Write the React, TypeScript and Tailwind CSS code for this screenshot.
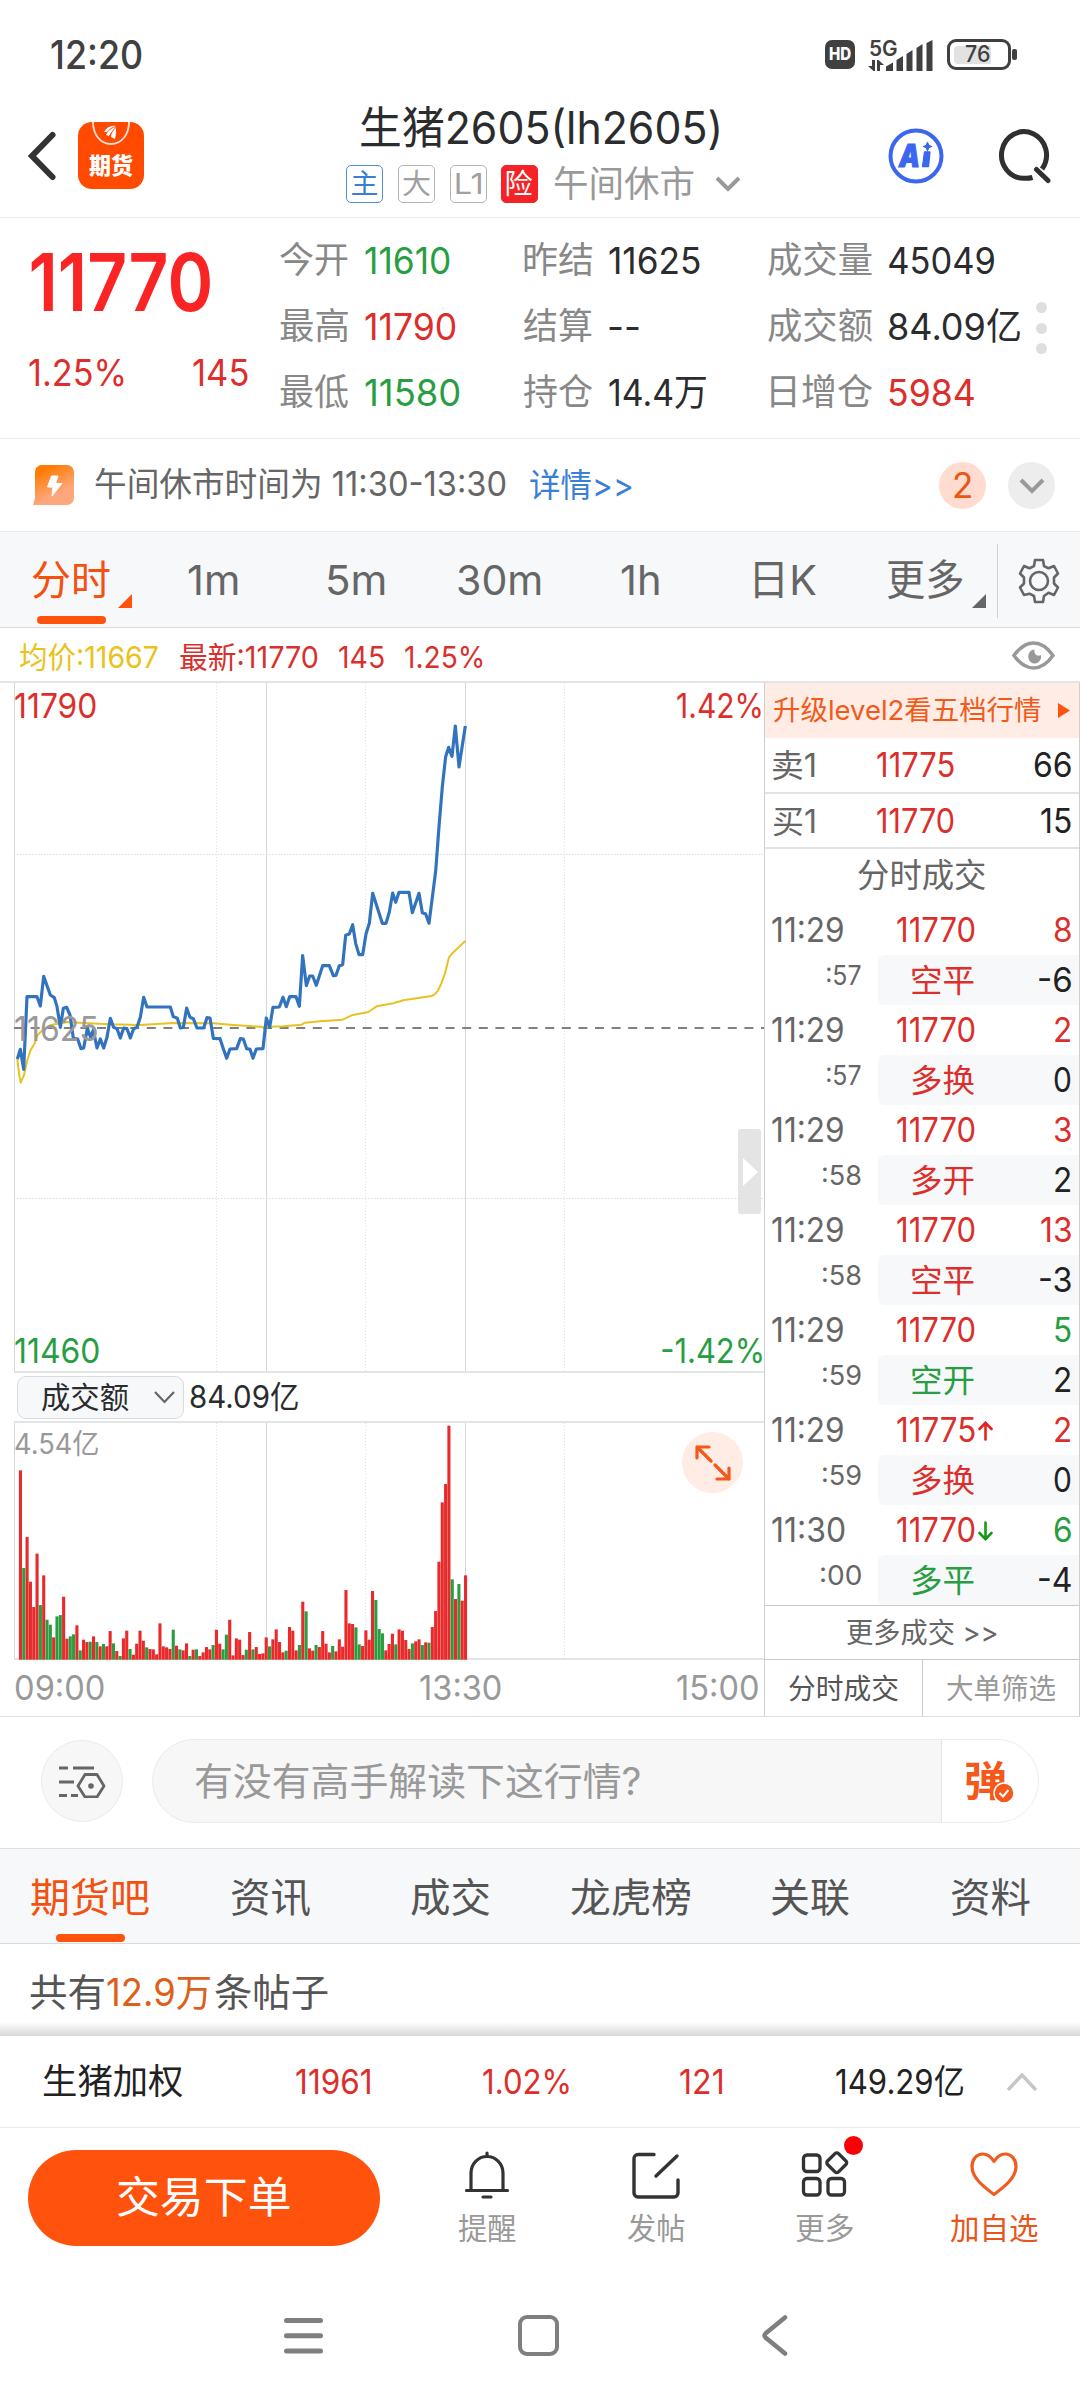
import { useLayoutEffect, useRef, useState } from "react";
import type { ReactNode } from "react";

let measureCtx: CanvasRenderingContext2D | null = null;

/** One line of text whose glyphs span exactly `w` pixels. */
function T({ w, className = "", children }: { w: number; className?: string; children: string }) {
  const ref = useRef<HTMLSpanElement>(null);
  const [fit, setFit] = useState({ scale: 1, shift: 0 });
  useLayoutEffect(() => {
    if (!ref.current) return;
    measureCtx = measureCtx ?? document.createElement("canvas").getContext("2d");
    if (!measureCtx) return;
    const cs = getComputedStyle(ref.current);
    measureCtx.font = `${cs.fontWeight} ${cs.fontSize} ${cs.fontFamily}`;
    const m = measureCtx.measureText(children);
    const ink = m.actualBoundingBoxLeft + m.actualBoundingBoxRight;
    if (ink > 0) {
      const scale = w / ink;
      setFit({ scale, shift: m.actualBoundingBoxLeft * scale });
    }
  }, [w, children]);
  return (
    <span className={`block flex-none leading-none ${className}`} style={{ width: w }}>
      <span
        ref={ref}
        className="block w-max origin-left whitespace-pre leading-none"
        style={{ transform: `translateX(${fit.shift}px) scaleX(${fit.scale})` }}
      >
        {children}
      </span>
    </span>
  );
}

const RED = "text-[#dc2f2c]";
const GREEN = "text-[#279e42]";
const DARK = "text-[#2b2c2e]";

function Chevron({ className, d = "M2 2 L13 13 L24 2", box = "0 0 26 16", sw = 4 }: { className: string; d?: string; box?: string; sw?: number }) {
  return (
    <svg className={className} viewBox={box} fill="none" stroke="currentColor" strokeWidth={sw}>
      <path d={d} />
    </svg>
  );
}

function StatusBar() {
  return (
    <div className="flex h-[109px] items-center pl-[51px] text-[#404040]">
      <T w={91} className="text-[39px] font-medium">12:20</T>
      <div className="ml-[683px] flex h-[29px] w-[30px] items-center justify-center rounded-[7px] bg-[#404040] text-white">
        <T w={22} className="text-[17px] font-extrabold">HD</T>
      </div>
      <div className="ml-[13px] flex h-[34px] w-[65px] items-end">
        <div className="flex w-[18px] flex-none flex-col self-stretch">
          <T w={27} className="ml-[2px] text-[21px] font-semibold">5G</T>
          <svg className="mt-[1px] h-[11px] w-[16px] flex-none" viewBox="0 0 16 11" fill="#404040">
            <path d="M4 0h3v11H5.500L0 6h4z M9 0h1.500L16 5h-4v6H9z" />
          </svg>
        </div>
        <svg className="mb-[1px] h-[31px] w-[47px] flex-none" viewBox="0 0 47 31" fill="#404040">
          <path d="M0 31v-4.5l7-4V31z M10.5 31V20l6.5-4v15z M20.5 31V14l6-4v21z M30.5 31V8l6-4v27z M40.5 31V3l6-3v31z" />
        </svg>
      </div>
      <div className="ml-[14px] flex h-[31px] w-[64px] items-center rounded-[9px] border-[3px] border-[#404040] pl-[4px]">
        <div className="flex h-[18px] w-[37px] items-center rounded-l-[4px] bg-[#e2e2e2] pl-[12px]">
          <T w={24} className="text-[23px] font-medium">76</T>
        </div>
      </div>
      <div className="ml-[1px] h-[11px] w-[5px] rounded-[2px] bg-[#404040]" />
    </div>
  );
}

function Badge({ children, className, w }: { children: string; className: string; w: number }) {
  return (
    <div className={`flex h-[38px] w-[37px] flex-none items-center justify-center rounded-[5px] border-[1.5px] ${className}`}>
      <T w={w} className="text-[28px]">{children}</T>
    </div>
  );
}

function Header() {
  return (
    <div className="border-b border-[#ebebeb] pb-[15px]">
      <div className="flex h-[93px] items-center pl-[28px]">
        <svg className="h-[50px] w-[29px]" viewBox="0 0 29 50" fill="none" stroke="#323334" strokeWidth="6" strokeLinecap="round">
          <path d="M24.5 4 L4 25 L24.5 46" strokeLinejoin="miter" />
        </svg>
        <div className="relative ml-[21px] flex h-[67px] w-[66px] items-end justify-center overflow-hidden rounded-[14px] bg-[#ff4a00] pb-[11px] text-white">
          <svg className="absolute left-[13px] top-0 h-[26px] w-[40px]" viewBox="0 0 40 26">
            <path d="M2 0C2 12 9 22 20 22S38 12 38 0" fill="none" stroke="#ffe3d5" strokeWidth="1.8" />
            <path d="M13 10c3-5 7-7 12-6-4 1-7 3-9 6zM15 13c2-4 5-7 10-8-3 3-5 5-7 9zM20 15c0-4 2-6 5-9 0 4 0 7-1 11z" fill="#fff" />
          </svg>
          <T w={44} className="text-[23px] font-black">期货</T>
        </div>
        <div className="ml-[202px] flex h-[111px] w-[396px] flex-none flex-col">
          <div className="flex h-[57px] items-center pl-[15px]">
            <T w={358} className={`text-[44.5px] ${DARK}`}>生猪2605(lh2605)</T>
          </div>
          <div className="flex h-[54px] items-center">
            <Badge w={26} className="border-[#4c8fdc] text-[#3a7fd5]">主</Badge>
            <Badge w={27} className="ml-[15px] border-[#b4b4b4] text-[#a0a0a0]">大</Badge>
            <Badge w={25} className="ml-[15px] border-[#b4b4b4] text-[#a0a0a0]">L1</Badge>
            <Badge w={26} className="ml-[14px] border-[#f52227] bg-[#f52227] text-white">险</Badge>
            <T w={140} className="ml-[16px] text-[36px] text-[#999]">午间休市</T>
            <Chevron className="ml-[20px] h-[16px] w-[28px] text-[#999]" />
          </div>
        </div>
        <svg className="ml-[146px] h-[56px] w-[56px]" viewBox="0 0 56 56">
          <circle cx="28" cy="28" r="25.5" fill="none" stroke="#3a66f0" strokeWidth="4" />
          <text x="11" y="38.500" fontSize="31" fontWeight="900" fontStyle="italic" fill="#3a66f0" stroke="#3a66f0" strokeWidth="1" textLength="21" lengthAdjust="spacingAndGlyphs">A</text>
          <path d="M36.500 24h5.500l-1.500 14.500h-6z M39.500 14.500l1.200 2.800 2.800 1.200-2.800 1.200-1.200 2.800-1.200-2.800-2.800-1.200 2.800-1.200z" fill="#3a66f0" stroke="#3a66f0" strokeWidth="1.300" strokeLinejoin="round" />
        </svg>
        <svg className="ml-[54px] h-[56px] w-[56px]" viewBox="0 0 56 56" fill="none" stroke="#2f3031" strokeWidth="5" strokeLinecap="round">
          <path d="M34.5 49.500C31.500 50.300 29 50.500 26.500 50.300A22.500 23.300 0 1 1 44 41" strokeLinecap="butt" />
          <path d="M38.500 41.500 L50 52.500" />
        </svg>
      </div>
    </div>
  );
}

const quoteRows: { label: string; lw: number; value: string; vw: number; tone: string }[][] = [
  [
    { label: "今开", lw: 68, value: "11610", vw: 85, tone: GREEN },
    { label: "昨结", lw: 68, value: "11625", vw: 91, tone: DARK },
    { label: "成交量", lw: 104, value: "45049", vw: 105, tone: DARK },
  ],
  [
    { label: "最高", lw: 68, value: "11790", vw: 91, tone: RED },
    { label: "结算", lw: 68, value: "--", vw: 30, tone: DARK },
    { label: "成交额", lw: 104, value: "84.09亿", vw: 131, tone: DARK },
  ],
  [
    { label: "最低", lw: 68, value: "11580", vw: 95, tone: GREEN },
    { label: "持仓", lw: 68, value: "14.4万", vw: 97, tone: DARK },
    { label: "日增仓", lw: 101, value: "5984", vw: 85, tone: RED },
  ],
];

function Quote() {
  return (
    <div className="flex h-[221px] border-b border-[#ebebeb]">
      <div className="flex w-[280px] flex-none flex-col pt-[24px]">
        <T w={179} className="ml-[31px] text-[80px] font-semibold text-[#f92423]">11770</T>
        <div className={`mt-[32px] flex pl-[29px] text-[37px] ${RED}`}>
          <T w={95}>1.25%</T>
          <T w={55} className="ml-[69px]">145</T>
        </div>
      </div>
      <div className="flex w-[756px] flex-none flex-col pt-[9px]">
        {quoteRows.map((row) => (
          <div key={row[0].label} className="grid h-[66px] grid-cols-[244px_244px_268px] items-center">
            {row.map((c) => (
              <div key={c.label} className="flex items-center">
                <T w={c.lw} className={`text-[36px] text-[#888] ${c.lw === 101 ? "ml-[3px]" : ""}`}>{c.label}</T>
                <T w={c.vw} className={`ml-[17px] text-[37px] ${c.tone}`}>{c.value}</T>
              </div>
            ))}
          </div>
        ))}
      </div>
      <div className="flex flex-col gap-[9.500px] pt-[84px]">
        <i className="size-[11px] rounded-full bg-[#dedede]" />
        <i className="size-[11px] rounded-full bg-[#dedede]" />
        <i className="size-[11px] rounded-full bg-[#dedede]" />
      </div>
    </div>
  );
}

function Notice() {
  return (
    <div className="flex h-[93px] items-center border-b border-[#e8e9ea] pl-[33px]">
      <svg className="h-[40px] w-[41px]" viewBox="0 0 41 40">
        <defs>
          <linearGradient id="bolt" x1="0.2" y1="0" x2="0.7" y2="1">
            <stop offset="0.1" stopColor="#ff7a00" />
            <stop offset="0.75" stopColor="#ffa77c" />
          </linearGradient>
        </defs>
        <path d="M8 0H34a7 7 0 0 1 7 7V33a7 7 0 0 1-7 7H0L2 33V7a7 7 0 0 1 6-7z" fill="url(#bolt)" />
        <path d="M18.500 11h6.500l-2.500 7.500h6.500L19 31l1-9h-5.500z" fill="#fff" stroke="#fff" strokeWidth="1" strokeLinejoin="round" />
      </svg>
      <T w={411} className="ml-[21px] text-[33.500px] text-[#666]">午间休市时间为 11:30-13:30</T>
      <T w={102} className="ml-[24px] text-[33px] text-[#3a7fd5]">详情&gt;&gt;</T>
      <div className="ml-[307px] flex h-[47px] w-[47px] items-center justify-center rounded-full bg-[#ffdccf]">
        <T w={17} className="text-[35px] text-[#ea5514]">2</T>
      </div>
      <div className="ml-[22px] flex h-[47px] w-[47px] items-center justify-center rounded-full bg-[#ededed] pt-[2px] text-[#999]">
        <Chevron className="h-[16px] w-[26px]" />
      </div>
    </div>
  );
}

function Corner({ className }: { className: string }) {
  return (
    <svg className={`h-[14px] w-[14px] ${className}`} viewBox="0 0 14 14" fill="currentColor">
      <path d="M14 0V14H0z" />
    </svg>
  );
}

function PeriodTabs() {
  return (
    <div className="flex h-[96px] items-center border-b border-[#d8dadb] bg-[#f7f8fa] pl-[32px] pt-[2px] text-[41.500px] text-[#666]">
      <div className="relative flex w-[100px] flex-none items-center text-[#f4500f]">
        <T w={78} className="text-[41px]">分时</T>
        <Corner className="ml-[8px] mt-[40px] text-[#ff520d]" />
        <div className="absolute left-[5px] top-[62px] h-[8px] w-[69px] rounded-full bg-[#ff520d]" />
      </div>
      <T w={50} className="ml-[56px]">1m</T>
      <T w={57} className="ml-[90px]">5m</T>
      <T w={83} className="ml-[73px]">30m</T>
      <T w={38} className="ml-[80px]">1h</T>
      <T w={61} className="ml-[96px]">日K</T>
      <T w={76} className="ml-[71px]">更多</T>
      <Corner className="ml-[9px] mt-[40px]" />
      <div className="ml-[10.500px] h-[74px] w-px bg-[#d0d1d3]" />
      <svg className="ml-[20px] h-[46px] w-[42px]" viewBox="0 0 42 46" fill="none" stroke="#666" strokeWidth="2.600" strokeLinejoin="round">
        <path d="M17 2h8l1 6 4.500 2.300 5.500-2.300 4 7.500-4 4v6l4 4-4 7.500-5.500-2.300L26 38l-1 6h-8l-1-6-4.500-2.300L6 37l-4-7.500 4-4v-6l-4-4L6 8l5.500 2.300L16 8z" />
        <circle cx="21" cy="23" r="9" />
      </svg>
    </div>
  );
}

function Legend() {
  return (
    <div className="flex h-[53px] items-center pl-[20px] pt-[5px] text-[30px] text-[#d8302d]">
      <T w={138} className="text-[#e9c21c]">均价:11667</T>
      <T w={138} className="ml-[22px]">最新:11770</T>
      <T w={45} className="ml-[21px]">145</T>
      <T w={78} className="ml-[21px]">1.25%</T>
      <svg className="mb-[4px] ml-[529px] h-[29px] w-[43px]" viewBox="0 0 43 29">
        <path d="M2 14.500C8 6 14 2 21.500 2S35 6 41 14.500C35 23 29 27 21.500 27S8 23 2 14.500z" fill="none" stroke="#999" strokeWidth="3.500" />
        <path d="M22.500 8.500a6.500 7 0 1 0 6.500 5.500c-3 2-7.500-.5-6.500-5.500z" fill="#999" />
      </svg>
    </div>
  );
}

const priceLine =
  "52,1137 61,1108 71,1168 81,950 111,950 121,978 131,889 151,945 163,953 171,980 181,1042 190,985 200,982 210,1005 220,1075 233,1077 243,1106 251,1104 262,1046 272,1072 280,1050 291,1104 301,1077 311,1104 321,1072 331,1015 341,1042 351,1046 361,1074 371,1044 381,1046 391,1074 401,1046 411,1042 421,1012 431,952 441,981 511,981 520,1010 532,1015 541,1044 550,1042 560,984 570,1012 580,1016 591,1044 611,1044 621,1013 630,1014 640,1075 660,1076 670,1106 680,1135 690,1107 710,1106 721,1076 730,1077 740,1106 750,1108 759,1135 769,1107 789,1106 799,1014 809,1042 819,982 838,981 849,952 859,980 869,950 888,950 898,979 908,827 919,917 929,888 938,888 949,916 968,857 988,857 1000,887 1008,886 1018,857 1028,854 1037,766 1048,762 1058,734 1067,790 1077,824 1088,824 1098,762 1108,730 1118,640 1147,730 1158,730 1168,696 1178,639 1187,667 1197,637 1227,637 1237,698 1257,640 1267,698 1277,702 1287,730 1307,574 1317,440 1327,320 1337,230 1346,202 1356,229 1366,138 1377,261 1396,138";

const averageLine =
  "52,1137 57,1180 62,1208 72,1185 82,1140 92,1110 104,1090 112,1066 130,1048 150,1036 200,1026 250,1029 330,1033 420,1035 520,1029 640,1030 700,1035 790,1041 850,1039 905,1034 915,1028 960,1024 1028,1019 1055,1006 1105,996 1130,979 1180,970 1210,961 1295,948 1304,943 1314,932 1324,910 1335,880 1347,832 1357,820 1396,783";

const volumes =
  "450R 743G 650R 784R 860R 700R 854G 765R 898G 913G 951R 888G 884G 829R 955R 948G 942G 915R 990G 958R 965R 964G 948R 965G 978R 971G 978R 932R 969G 992R 1007G 954R 931R 986G 1003R 970R 931R 961R 981G 986R 987R 1002R 909R 978R 981R 986R 928G 976R 987G 990R 969R 1007G 988R 987G 1007R 996R 980R 987R 974G 928R 970R 987G 943G 898R 1005R 954R 958R 1004R 988G 935R 987G 980R 1001R 999R 951R 978G 957R 927R 965R 996R 991G 920R 931R 990R 974G 844R 873G 984R 991R 974G 980R 932R 970R 996R 977G 993R 957R 979R 809R 909R 911R 921G 972G 977R 930R 958R 812R 839G 926G 939G 990R 971R 940R 972G 927R 931R 959R 986R 969G 963R 957R 974G 966R 967G 920R 872R 724R 546R 491R 316R 777G 836R 791G 841R 765R"
    .split(" ")
    .map((s) => ({ h: (1018 - parseInt(s, 10)) / 3, up: s.endsWith("R") }));

function Grid({ h }: { h: number }) {
  return (
    <g fill="none" shapeRendering="crispEdges">
      <path d={`M14.500 0V${h} M266.500 0V${h} M465.500 0V${h}`} stroke="#d6d6d6" strokeWidth="1" />
      <path d={`M216.500 0V${h} M365.500 0V${h} M564.500 0V${h}`} stroke="#e2e2e2" strokeWidth="1" strokeDasharray="1 2" />
    </g>
  );
}

function Charts() {
  return (
    <div className="flex w-[764px] flex-none flex-col">
      <div className="relative h-[688px]">
        <svg className="block h-[688px] w-[764px]" viewBox="0 0 764 688">
          <Grid h={688} />
          <path d="M14 171.500H764 M14 515.500H764" stroke="#dcdcdc" strokeDasharray="1.500 1.500" fill="none" />
          <path d="M14 345H764" stroke="#808080" strokeWidth="2" strokeDasharray="9 7.600" fill="none" />
          <g transform="translate(0,-3) scale(0.33333)" fill="none" strokeLinejoin="round">
            <polyline points={averageLine} stroke="#e9c222" strokeWidth="6" />
            <polyline points={priceLine} stroke="#3273bd" strokeWidth="9.500" />
          </g>
        </svg>
        <T w={81} className={`absolute left-[15px] top-[6px] text-[34px] ${RED}`}>11790</T>
        <T w={84} className={`absolute left-[677px] top-[6px] text-[34px] ${RED}`}>1.42%</T>
        <T w={82} className="absolute left-[15px] top-[329px] text-[34px] text-[#999]">11625</T>
        <T w={84} className={`absolute left-[15px] top-[651px] text-[34px] ${GREEN}`}>11460</T>
        <T w={100} className={`absolute left-[662px] top-[651px] text-[34px] ${GREEN}`}>-1.42%</T>
        <div className="absolute left-[738px] top-[446px] flex h-[85px] w-[23px] items-center rounded-[3px] bg-[#e4e4e4] pl-[5px]">
          <svg className="h-[28px] w-[15px]" viewBox="0 0 15 28" fill="#fff"><path d="M0 0L15 14L0 28z" /></svg>
        </div>
      </div>
      <div className="ml-[14px] flex h-[52px] items-center border-y-2 border-[#e3e4e5] pl-[3px]">
        <div className="flex h-[43px] w-[167px] items-center rounded-[9px] border border-[#d9dbe0] bg-[#f7f8fa] pl-[24px]">
          <T w={87} className={`text-[30px] ${DARK}`}>成交额</T>
          <svg className="ml-[25px] h-[14px] w-[21px]" viewBox="0 0 21 14" fill="none" stroke="#666" strokeWidth="2.200"><path d="M1 2L10.500 12L20 2" /></svg>
        </div>
        <T w={108} className={`ml-[6px] text-[30.500px] ${DARK}`}>84.09亿</T>
      </div>
      <div className="relative h-[235px]">
        <svg className="block h-[237px] w-[764px]" viewBox="0 0 764 237">
          <Grid h={235} />
          <path d="M14 236H764" stroke="#e3e4e5" strokeWidth="2" />
          {volumes.map((v, i) => (
            <rect key={i} x={18.900 + i * 3.3215} y={236.700 - v.h} width="3.100" height={v.h} fill={v.up ? "#ea2a2a" : "#2b9c40"} />
          ))}
        </svg>
        <T w={83} className="absolute left-[15px] top-[7px] text-[28.500px] text-[#999]">4.54亿</T>
        <div className="absolute left-[682px] top-[9px] flex size-[61px] items-center justify-center rounded-full bg-[#ffece5]">
          <svg className="size-[38px]" viewBox="0 0 38 38" fill="none" stroke="#f4581b" strokeWidth="3.200" strokeLinecap="round" strokeLinejoin="round">
            <path d="M17 17L3 3M3 14V3H15 M21 21L35 35M35 24V35H23" />
          </svg>
        </div>
      </div>
      <div className="flex h-[58px] items-center pl-[16px] pt-[2px] text-[34px] text-[#999]">
        <T w={88}>09:00</T>
        <T w={81} className="ml-[316px]">13:30</T>
        <T w={81} className="ml-[176px]">15:00</T>
      </div>
    </div>
  );
}

const trades: { t: string; s: string; sw: number; p: string; arrow?: "up" | "down"; q: string; qw: number; qt: string; k: string; kt: string; d: string; dw: number }[] = [
  { t: "11:29", s: ":57", sw: 34, p: "11770", q: "8", qw: 17, qt: RED, k: "空平", kt: RED, d: "-6", dw: 32 },
  { t: "11:29", s: ":57", sw: 34, p: "11770", q: "2", qw: 16, qt: RED, k: "多换", kt: RED, d: "0", dw: 17 },
  { t: "11:29", s: ":58", sw: 38, p: "11770", q: "3", qw: 16, qt: RED, k: "多开", kt: RED, d: "2", dw: 16 },
  { t: "11:29", s: ":58", sw: 38, p: "11770", q: "13", qw: 30, qt: RED, k: "空平", kt: RED, d: "-3", dw: 31 },
  { t: "11:29", s: ":59", sw: 38, p: "11770", q: "5", qw: 16, qt: GREEN, k: "空开", kt: GREEN, d: "2", dw: 16 },
  { t: "11:29", s: ":59", sw: 38, p: "11775", arrow: "up", q: "2", qw: 16, qt: RED, k: "多换", kt: RED, d: "0", dw: 17 },
  { t: "11:30", s: ":00", sw: 40, p: "11770", arrow: "down", q: "6", qw: 17, qt: GREEN, k: "多平", kt: GREEN, d: "-4", dw: 32 },
];

function BookRow({ side, price, qty, qw }: { side: string; price: string; qty: string; qw: number }) {
  return (
    <div className="flex h-full items-center justify-between pl-[8px] pr-[8px] pt-[2px] text-[33.500px]">
      <T w={42} className="text-[32px] text-[#666]">{side}</T>
      <div className="flex flex-1 pl-[62px]"><T w={77} className={RED}>{price}</T></div>
      <T w={qw} className="text-[#222]">{qty}</T>
    </div>
  );
}

function OrderPanel() {
  return (
    <div className="flex w-[316px] flex-none flex-col border-x border-[#cfcfcf]">
      <div className="flex h-[55px] items-center bg-[#ffece5] pl-[9px] text-[#f05a1a]">
        <T w={267} className="text-[27.500px]">升级level2看五档行情</T>
        <svg className="ml-[17px] h-[15px] w-[12px]" viewBox="0 0 12 15" fill="#ff520d"><path d="M0 0L12 7.500L0 15z" /></svg>
      </div>
      <div className="h-[56px] border-b-2 border-[#e3e3e3]"><BookRow side="卖1" price="11775" qty="66" qw={37} /></div>
      <div className="h-[55px] border-b-2 border-[#e3e3e3]"><BookRow side="买1" price="11770" qty="15" qw={30} /></div>
      <div className="flex h-[56px] items-center justify-center pb-[2px] text-[#666]">
        <T w={128} className="text-[32.500px]">分时成交</T>
      </div>
      {trades.map((r, i) => (
        <div key={i} className="h-[100px]">
          <div className="flex h-[50px] items-center pl-[7px] pr-[8px] pt-[2px] text-[33.500px]">
            <T w={r.t === "11:30" ? 73 : 71} className="text-[#666]">{r.t}</T>
            <div className={r.t === "11:30" ? "ml-[52px]" : "ml-[54px]"}><T w={78} className={RED}>{r.p}</T></div>
            {r.arrow && (
              <svg className={`ml-[3px] h-[20px] w-[15px] ${r.arrow === "down" ? "rotate-180 text-[#149a14]" : "text-[#e8201f]"}`} viewBox="0 0 15 20" fill="none" stroke="currentColor" strokeWidth="2.600" strokeLinecap="round">
                <path d="M7.500 18.500V2M1.500 8L7.500 1.800L13.500 8" />
              </svg>
            )}
            <div className="ml-auto"><T w={r.qw} className={r.qt}>{r.q}</T></div>
          </div>
          <div className="flex h-[50px]">
            <div className="flex w-[113px] flex-none justify-end pr-[17px] pt-[7px]">
              <T w={r.sw} className="text-[27.500px] text-[#666]">{r.s}</T>
            </div>
            <div className="flex flex-1 items-center justify-between rounded-l-[6px] bg-[#f7f8fa] pl-[34px] pr-[8px] pt-[1px]">
              <T w={62} className={`text-[32px] ${r.kt}`}>{r.k}</T>
              <T w={r.dw} className="text-[33.500px] text-[#222]">{r.d}</T>
            </div>
          </div>
        </div>
      ))}
      <div className="flex h-[54px] items-center justify-center border-t border-[#c9cacb] text-[#666]">
        <T w={150} className="text-[28px]">更多成交 &gt;&gt;</T>
      </div>
      <div className="flex flex-1 border-t border-[#c9cacb]">
        <div className="flex w-[158px] items-center justify-center border-r border-[#c9cacb] pt-[1px] text-[#555]">
          <T w={109} className="text-[28px]">分时成交</T>
        </div>
        <div className="flex flex-1 items-center justify-center pt-[1px] text-[#999]">
          <T w={109} className="text-[28px]">大单筛选</T>
        </div>
      </div>
    </div>
  );
}

function CommentBar() {
  return (
    <div className="flex h-[132px] items-center border-b border-[#dcdedf] pb-[3px] pl-[41px]">
      <div className="flex size-[82px] flex-none items-center justify-center rounded-full border border-[#ebebeb] bg-[#f7f7f7]">
        <svg className="h-[34px] w-[48px]" viewBox="0 0 48 34" fill="none" stroke="#666" strokeWidth="3">
          <path d="M1 4H10M15 4H36 M1 18H16 M1 31.500H9M13 31.500H20" />
          <path d="M27 10.500H39L46 22L39 33H27L20 22z" strokeLinejoin="round" strokeWidth="2.800" />
          <circle cx="33" cy="22" r="2.800" fill="#666" stroke="none" />
        </svg>
      </div>
      <div className="ml-[29px] flex h-[84px] w-[887px] flex-none items-center overflow-hidden rounded-full border-[1.500px] border-[#ebebeb] bg-[#f7f7f7]">
        <T w={445} className="ml-[42px] text-[38px] text-[#999]">有没有高手解读下这行情?</T>
        <div className="relative ml-auto flex h-full w-[97px] items-center border-l-[1.500px] border-[#e6e6e6] bg-white pl-[24px] text-[#f4581b]">
          <T w={40} className="text-[41px] font-bold">弹</T>
          <svg className="absolute left-[51px] top-[42px] size-[22px]" viewBox="0 0 22 22">
            <circle cx="11" cy="11" r="10" fill="#f4581b" stroke="#fff" strokeWidth="1.500" />
            <path d="M6.500 11L10 14.500L15.500 8" fill="none" stroke="#fff" strokeWidth="2" />
          </svg>
        </div>
      </div>
    </div>
  );
}

function SectionTabs() {
  const tabs: [string, number][] = [["期货吧", 118], ["资讯", 79], ["成交", 79], ["龙虎榜", 119], ["关联", 78], ["资料", 79]];
  return (
    <div className="grid h-[95px] grid-cols-6 border-b border-[#d8dadb] bg-[#f7f8fa] text-[40px] text-[#555]">
      {tabs.map(([name, w], i) => (
        <div key={name} className={`relative flex items-center justify-center pt-[3px] ${i === 0 ? "text-[#f4500f]" : ""}`}>
          <T w={w}>{name}</T>
          {i === 0 && <div className="absolute bottom-[1px] left-[56px] h-[8px] w-[69px] rounded-full bg-[#ff520d]" />}
        </div>
      ))}
    </div>
  );
}

function Action({ label, w, children, className = "text-[#999]" }: { label: string; w: number; children: ReactNode; className?: string }) {
  return (
    <div className={`flex w-[169px] flex-none flex-col items-center pt-[23px] ${className}`}>
      {children}
      <T w={w} className="mt-[15px] text-[29.500px]">{label}</T>
    </div>
  );
}

function BottomBar() {
  return (
    <>
      <div className="flex h-[92px] items-center border-b border-[#ebebeb] pl-[43px] text-[34px]">
        <T w={140} className="text-[35.500px] text-[#222]">生猪加权</T>
        <T w={74} className={`ml-[113px] ${RED}`}>11961</T>
        <T w={86} className={`ml-[113px] ${RED}`}>1.02%</T>
        <T w={42} className={`ml-[111px] ${RED}`}>121</T>
        <T w={127} className="ml-[114px] text-[#222]">149.29亿</T>
        <Chevron className="ml-[43px] h-[19px] w-[32px] text-[#c6c6c6]" box="0 0 32 19" d="M2 18L16 3L30 18" sw={3.5} />
      </div>
      <div className="flex h-[147px]">
        <div className="ml-[28px] mt-[22px] flex h-[96px] w-[352px] flex-none items-center justify-center rounded-full bg-[#ff520d] text-white">
          <T w={172} className="text-[43.500px]">交易下单</T>
        </div>
        <div className="ml-[22px] flex">
          <Action label="提醒" w={58}>
            <svg className="h-[48px] w-[46px]" viewBox="0 0 46 48" fill="none" stroke="#333" strokeWidth="3.200" strokeLinecap="round">
              <path d="M23 2V5 M7 39V22a16 16.500 0 0 1 32 0V39 M2.500 39.500H43.500 M19 46H27" />
            </svg>
          </Action>
          <Action label="发帖" w={58}>
            <svg className="h-[48px] w-[48px]" viewBox="0 0 48 48" fill="none" stroke="#333" strokeWidth="3.400" strokeLinecap="round" strokeLinejoin="round">
              <path d="M22 3.500H6a4 4 0 0 0-4 4V42a4 4 0 0 0 4 4H42a4 4 0 0 0 4-4V29 M45 5L24 25" />
            </svg>
          </Action>
          <Action label="更多" w={57}>
            <div className="relative">
              <svg className="h-[48px] w-[48px]" viewBox="0 0 48 48" fill="none" stroke="#333" strokeWidth="3.300" strokeLinejoin="round">
                <rect x="2.500" y="4" width="16.500" height="16.500" rx="3.500" />
                <rect x="2.500" y="27.500" width="16.500" height="16.500" rx="3.500" />
                <rect x="27" y="27.500" width="16.500" height="16.500" rx="3.500" />
                <rect x="28" y="4" width="15.500" height="15.500" rx="2.500" transform="rotate(45 35.750 11.750)" />
              </svg>
              <i className="absolute left-[43px] top-[-15px] size-[19px] rounded-full bg-[#fb0006]" />
            </div>
          </Action>
          <Action label="加自选" w={88} className="text-[#e8561b]">
            <svg className="h-[48px] w-[48px]" viewBox="0 0 48 48" fill="none" stroke="#ef5b20" strokeWidth="3.200" strokeLinejoin="round">
              <path d="M24 10.500C20.500 5 16.500 3 13 3C6.500 3 2 8.500 2 15.500C2 27 14 36 24 43.500C34 36 46 27 46 15.500C46 8.500 41.500 3 35 3C31.500 3 27.500 5 24 10.500z" />
            </svg>
          </Action>
        </div>
      </div>
      <div className="flex h-[120px] items-center pl-[284px]">
        <svg className="h-[37px] w-[39px]" viewBox="0 0 39 37" stroke="#7f7f7f" strokeWidth="5" strokeLinecap="round"><path d="M2.500 3.500H36.500M2.500 18.800H36.500M2.500 34H36.500" /></svg>
        <div className="ml-[195px] size-[41px] rounded-[9px] border-[4.500px] border-[#7f7f7f]" />
        <svg className="ml-[202px] h-[41px] w-[27px]" viewBox="0 0 27 41" fill="none" stroke="#7f7f7f" strokeWidth="4.500" strokeLinecap="round"><path d="M24 2.500L4.500 18.500Q2.500 20.500 4.500 22.500L24 38.500" /></svg>
      </div>
    </>
  );
}

export default function App() {
  return (
    <div className="h-[2400px] w-[1080px] overflow-hidden bg-white font-['Inter','Noto_Sans_CJK_SC',sans-serif]">
      <StatusBar />
      <Header />
      <Quote />
      <Notice />
      <PeriodTabs />
      <Legend />
      <div className="flex h-[1036px] border-b border-t-2 border-b-[#dcdedf] border-t-[#e3e4e5]">
        <Charts />
        <OrderPanel />
      </div>
      <CommentBar />
      <SectionTabs />
      <div className="flex h-[92px] flex-col">
        <div className="flex flex-1 items-center pl-[30px] pt-[18px] text-[38px] text-[#555]">
          <T w={74}>共有</T>
          <T w={103} className="ml-[3px] text-[#de6018]">12.9万</T>
          <T w={113} className="ml-[5px]">条帖子</T>
        </div>
        <div className="h-[14px] bg-linear-to-b from-white to-[#d8d8d8]" />
      </div>
      <BottomBar />
    </div>
  );
}
